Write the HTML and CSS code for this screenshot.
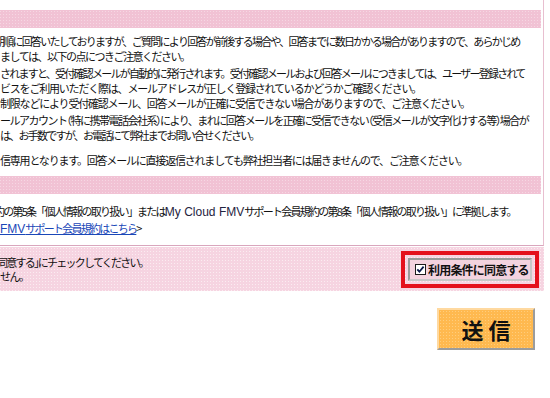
FILE: index.html
```html
<!DOCTYPE html>
<html lang="ja">
<head>
<meta charset="utf-8">
<title>お問い合わせ</title>
<link rel="stylesheet" href="styles.css">
</head>
<body>
<div class="frame">
  <div class="band"></div>
  <div class="cell">
    <p class="para">
      <span class="line cut tight">期順に回答いたしておりますが、ご質問により回答が前後する場合や、回答までに数日かかる場合がありますので、あらかじめ</span>
      <span class="line">ましては、以下の点につきご注意ください。</span>
    </p>
    <p class="para">
      <span class="line tight">されますと、受付確認メールが自動的に発行されます。受付確認メールおよび回答メールにつきましては、ユーザー登録されて</span>
      <span class="line loose">ビスをご利用いただく際は、メールアドレスが正しく登録されているかどうかご確認ください。</span>
      <span class="line loose">制限などにより受付確認メール、回答メールが正確に受信できない場合がありますので、ご注意ください。</span>
    </p>
    <p class="para">
      <span class="line">ールアカウント<span class="punct">（</span>特に携帯電話会社系<span class="punct">）</span>により、まれに回答メールを正確に受信できない<span class="punct">（</span>受信メールが文字化けする等<span class="punct">）</span>場合が</span>
      <span class="line tight">は、お手数ですが、お電話にて弊社までお問い合せください。</span>
    </p>
    <p class="para last">
      <span class="line loose">信専用となります。回答メールに直接返信されましても弊社担当者には届きませんので、ご注意ください。</span>
    </p>
  </div>
  <div class="band"></div>
  <div class="cell cell-policy">
    <span class="line cut tight">約の第5条「個人情報の取り扱い」または<span class="latin">My Cloud FMV</span>サポート会員規約の第8条「個人情報の取り扱い」に準拠します。</span>
    <span class="line tight"><a class="link" href="#"><span class="latin">FMV</span>サポート会員規約はこちら</a>&gt;</span>
  </div>
</div>

<div class="agree">
  <div class="agree-text">
    <span class="line cut-small tight">同意する<span class="punct">」</span>にチェックしてください。</span>
    <span class="line">せん。</span>
  </div>
  <div class="agree-box">
    <label class="agree-label">
      <svg class="check" width="11" height="11" viewBox="0 0 11 11" aria-hidden="true">
        <rect x="0.5" y="0.5" width="10" height="10" fill="#fff" stroke="#1c1c1c"/>
        <path d="M2.3 5.4 L4.4 7.7 L8.6 2.6" fill="none" stroke="#0a1a4a" stroke-width="1.8"/>
      </svg>
      <span class="agree-word">利用条件に同意する</span>
    </label>
  </div>
</div>

<div class="actions">
  <button class="send" type="button">送 信</button>
</div>
</body>
</html>
```

FILE: styles.css
```css
html, body {
  margin: 0;
  padding: 0;
  background: #fff;
  overflow: hidden;
}

body {
  width: 550px;
  height: 398px;
  font-family: "Noto Sans CJK JP", "Noto Sans", sans-serif;
  font-size: 11px;
  letter-spacing: -1.5px;
  color: #111;
}

.frame {
  box-sizing: border-box;
  width: 554px;
  margin-left: -10px;
  padding: 10px 2px 2px 2px;
  border: 1px solid #e8bfd0;
  border-top: none;
  border-bottom-color: #d9a6bd;
  display: flex;
  flex-direction: column;
  gap: 2px;
}

.band {
  height: 18px;
  background-color: #f1c2d4;
  background-image: radial-gradient(rgba(255,255,255,0.35) 0.6px, transparent 0.8px);
  background-size: 3px 3px;
}

.cell {
  padding: 4px 0 6px 7px;
  background: #fff;
  overflow: hidden;
}

.para {
  margin: 0 0 2px 0;
}

.para.last {
  margin-top: 10px;
  margin-bottom: 0;
}

.line {
  display: block;
  white-space: nowrap;
  line-height: 15px;
}

.tight {
  letter-spacing: -1.75px;
}

.loose {
  letter-spacing: -1.2px;
}

.punct {
  font-feature-settings: "halt";
}

.cut {
  margin-left: -6px;
}

.cut-small {
  margin-left: -3px;
}

.cell-policy {
  padding-top: 7px;
  padding-bottom: 6px;
}

.cell-policy .line {
  line-height: 16px;
}

.latin {
  font-family: "Liberation Sans", Arial, sans-serif;
  font-size: 12px;
  letter-spacing: 0;
  color: #1f2340;
}

.link {
  color: #1a47b8;
  text-decoration: underline;
}

.link .latin {
  color: #1a47b8;
}

.agree {
  box-sizing: border-box;
  width: 554px;
  margin-left: -10px;
  margin-top: 1px;
  height: 44px;
  padding: 0 5px 0 10px;
  background-color: #f6d4e1;
  background-image: radial-gradient(rgba(255,255,255,0.55) 0.6px, transparent 0.8px);
  background-size: 3px 3px;
  display: flex;
  align-items: center;
  justify-content: space-between;
}

.agree-text .line {
  line-height: 14px;
}

.agree-box {
  box-sizing: border-box;
  width: 138px;
  height: 37px;
  border: 4px solid #e4101c;
  padding: 3px;
  display: flex;
}

.agree-label {
  flex: 1;
  display: flex;
  align-items: center;
  gap: 2px;
  padding-left: 5px;
  border: 2px solid #9a9a9a;
  border-right-color: #c8c8c8;
  border-bottom-color: #c8c8c8;
  background: #f3d3df;
  font-weight: bold;
  font-size: 12px;
  letter-spacing: -0.8px;
  color: #111;
  white-space: nowrap;
}

.check {
  display: block;
  flex: none;
}

.actions {
  display: flex;
  justify-content: flex-end;
  padding: 17px 15px 0 0;
}

.send {
  box-sizing: border-box;
  width: 98px;
  height: 42px;
  margin: 0;
  padding: 0;
  background-color: #ffb94f;
  background-image: radial-gradient(rgba(255,230,180,0.45) 0.6px, transparent 0.8px);
  background-size: 3px 3px;
  border: 2px solid #ffd9a0;
  border-right-color: #9c9c9c;
  border-bottom-color: #9c9c9c;
  font-family: "Noto Sans CJK JP", sans-serif;
  font-weight: bold;
  font-size: 22px;
  letter-spacing: 0;
  color: #111;
  line-height: 1;
}
```
